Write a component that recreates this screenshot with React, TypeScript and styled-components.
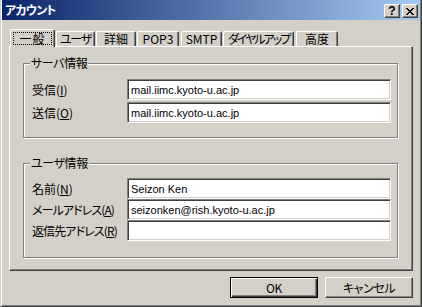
import React from 'react';
import styled, { createGlobalStyle } from 'styled-components';

const FACE = '#d4d0c8';
const SHADOW = '#808080';
const DARK = '#404040';
const JP = `"Noto Sans CJK JP", "Noto Sans", sans-serif`;

const Global = createGlobalStyle`
  html, body { margin: 0; padding: 0; background: ${FACE}; }
  body { width: 422px; height: 307px; overflow: hidden; }
  * { box-sizing: border-box; }
`;

const Window = styled.div`
  width: 422px;
  height: 307px;
  display: flex;
  flex-direction: column;
  background: ${FACE};
  border-left: 1px solid ${FACE};
  border-right: 1px solid ${DARK};
  border-bottom: 1px solid ${DARK};
  box-shadow: inset 1px 0 0 #fff, inset -1px -1px 0 ${SHADOW};
  padding: 0 1px 1px 1px;
  font-family: ${JP};
  font-size: 12px;
  font-feature-settings: "palt" 1;
  color: #000;
`;

const TitleBar = styled.div`
  height: 20px;
  flex: none;
  display: flex;
  align-items: center;
  padding: 0 2px 0 3px;
  background: linear-gradient(to right, #0a246a, #a6caf0);
`;

const Title = styled.div`
  flex: 1;
  color: #fff;
  font-weight: bold;
  font-size: 12px;
  line-height: 14px;
  letter-spacing: -0.8px;
`;

const CapButton = styled.div`
  width: 16px;
  height: 14px;
  margin-top: 2px;
  display: flex;
  align-items: center;
  justify-content: center;
  background: ${FACE};
  border: 1px solid;
  border-color: #fff ${DARK} ${DARK} #fff;
  box-shadow: inset -1px -1px 0 ${SHADOW};
  font-family: "Liberation Sans", sans-serif;
  font-weight: bold;
  font-size: 12px;
  line-height: 1;
  & + & { margin-left: 2px; }
`;

const Body = styled.div`
  flex: 1;
  display: flex;
  flex-direction: column;
  padding: 9px 7px 7px 7px;
`;

const TabStrip = styled.div`
  height: 17px;
  flex: none;
  display: flex;
  align-items: flex-end;
  position: relative;
  z-index: 1;
`;

const Tab = styled.div<{ $w: number; $gap: number; $ls: number; $active?: boolean }>`
  flex: none;
  width: ${p => p.$w}px;
  height: ${p => (p.$active ? 18 : 15)}px;
  margin-left: ${p => p.$gap}px;
  margin-bottom: ${p => (p.$active ? -1 : 0)}px;
  padding: ${p => (p.$active ? '2px' : '0')};
  background: ${FACE};
  border-top: 1px solid #fff;
  border-left: 1px solid #fff;
  border-right: 1px solid ${DARK};
  border-radius: 2px 2px 0 0;
  box-shadow: inset -1px 0 0 ${SHADOW};
  display: flex;
  align-items: center;
  justify-content: center;
  line-height: 14px;
  letter-spacing: ${p => p.$ls}px;
  white-space: nowrap;
`;

const Focus = styled.div`
  flex: 1;
  align-self: stretch;
  display: flex;
  align-items: center;
  justify-content: center;
  border: 1px dotted #000;
  line-height: 12px;
`;

const Panel = styled.div`
  height: 225px;
  flex: none;
  border-top: 1px solid #fff;
  border-left: 1px solid #fff;
  border-right: 1px solid ${DARK};
  border-bottom: 1px solid ${DARK};
  box-shadow: inset -1px -1px 0 ${SHADOW};
  padding: 16px 14px 0 13px;
  display: flex;
  flex-direction: column;
  gap: 25px;
`;

const Group = styled.div<{ $h: number; $pt: number; $gap: number }>`
  position: relative;
  flex: none;
  height: ${p => p.$h}px;
  border: 1px solid ${SHADOW};
  box-shadow: inset 1px 1px 0 #fff, 1px 1px 0 #fff;
  padding: ${p => p.$pt}px 6px 0 8px;
  display: flex;
  flex-direction: column;
  gap: ${p => p.$gap}px;
`;

const Legend = styled.div`
  position: absolute;
  top: -8px;
  left: 6px;
  padding: 0 1px;
  background: ${FACE};
  line-height: 14px;
  letter-spacing: -0.4px;
`;

const Row = styled.div<{ $h: number }>`
  display: flex;
  align-items: center;
  height: ${p => p.$h}px;
`;

const Label = styled.div<{ $ls: number }>`
  width: 95px;
  flex: none;
  white-space: nowrap;
  line-height: 14px;
  letter-spacing: ${p => p.$ls}px;
`;

const Acc = styled.span`
  text-decoration: underline;
  text-underline-offset: 1px;
`;

const Field = styled.div`
  width: 264px;
  height: 100%;
  flex: none;
  background: #fff;
  border: 1px solid;
  border-color: ${SHADOW} #fff #fff ${SHADOW};
  box-shadow: inset 1px 1px 0 ${DARK}, inset -1px -1px 0 ${FACE};
  padding: 0 3px;
  display: flex;
  align-items: center;
  font-family: "Liberation Sans", Arial, sans-serif;
  font-size: 11px;
  white-space: nowrap;
  overflow: hidden;
`;

const Footer = styled.div`
  display: flex;
  justify-content: flex-end;
  gap: 7px;
  margin-top: 6px;
`;

const Button = styled.div<{ $default?: boolean }>`
  width: 88px;
  height: 21px;
  display: flex;
  align-items: center;
  justify-content: center;
  background: ${FACE};
  border: 1px solid;
  border-color: ${p => (p.$default ? '#000' : `#fff ${DARK} ${DARK} #fff`)};
  box-shadow: ${p =>
    p.$default
      ? `inset 1px 1px 0 #fff, inset -1px -1px 0 ${DARK}, inset -2px -2px 0 ${SHADOW}`
      : `inset -1px -1px 0 ${SHADOW}`};
  line-height: 14px;
  letter-spacing: -0.4px;
`;

const CloseIcon = () => (
  <svg width="8" height="7" viewBox="0 0 8 7" shapeRendering="crispEdges">
    <path
      fill="#000"
      d="M0 0h2v1H0z M6 0h2v1H6z M1 1h2v1H1z M5 1h2v1H5z M2 2h4v1H2z M3 3h2v1H3z M2 4h4v1H2z M1 5h2v1H1z M5 5h2v1H5z M0 6h2v1H0z M6 6h2v1H6z"
    />
  </svg>
);

const tabs = [
  { t: '一般', w: 45, gap: 1, ls: 1, active: true },
  { t: 'ユーザ', w: 39, gap: 1, ls: -1.2 },
  { t: '詳細', w: 40, gap: 1, ls: 0 },
  { t: 'POP3', w: 42, gap: 1, ls: 0 },
  { t: 'SMTP', w: 41, gap: 2, ls: 0 },
  { t: 'ダイヤルアップ', w: 71, gap: 1, ls: -2 },
  { t: '高度', w: 42, gap: 2, ls: 0 },
];

const FieldRow = ({
  label,
  acc,
  value,
  h,
  ls = 0,
}: {
  label: string;
  acc: string;
  value: string;
  h: number;
  ls?: number;
}) => (
  <Row $h={h}>
    <Label $ls={ls}>
      {label}(<Acc>{acc}</Acc>)
    </Label>
    <Field>{value}</Field>
  </Row>
);

export default function App() {
  return (
    <>
      <Global />
      <Window>
        <TitleBar>
          <Title>アカウント</Title>
          <CapButton>?</CapButton>
          <CapButton>
            <CloseIcon />
          </CapButton>
        </TitleBar>
        <Body>
          <TabStrip>
            {tabs.map(tb => (
              <Tab key={tb.t} $w={tb.w} $gap={tb.gap} $ls={tb.ls} $active={tb.active}>
                {tb.active ? <Focus>{tb.t}</Focus> : tb.t}
              </Tab>
            ))}
          </TabStrip>
          <Panel>
            <Group $h={75} $pt={15} $gap={2}>
              <Legend>サーバ情報</Legend>
              <FieldRow label="受信" acc="I" value="mail.iimc.kyoto-u.ac.jp" h={21} />
              <FieldRow label="送信" acc="O" value="mail.iimc.kyoto-u.ac.jp" h={21} />
            </Group>
            <Group $h={95} $pt={14} $gap={0}>
              <Legend>ユーザ情報</Legend>
              <FieldRow label="名前" acc="N" value="Seizon Ken" h={21} />
              <FieldRow label="メールアドレス" acc="A" value="seizonken@rish.kyoto-u.ac.jp" h={21} ls={-0.9} />
              <FieldRow label="返信先アドレス" acc="R" value="" h={21} ls={-0.9} />
            </Group>
          </Panel>
          <Footer>
            <Button $default>OK</Button>
            <Button>キャンセル</Button>
          </Footer>
        </Body>
      </Window>
    </>
  );
}
